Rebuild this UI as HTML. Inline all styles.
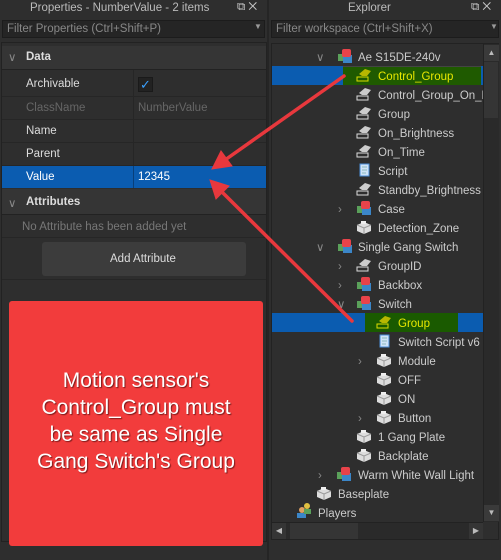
<!DOCTYPE html>
<html><head><style>
*{box-sizing:border-box;margin:0;padding:0}
body{width:501px;height:560px;background:#2e2e2e;font-family:"Liberation Sans",sans-serif;font-size:11.5px;color:#ccc;position:relative;overflow:hidden}
.a{position:absolute}
.t{white-space:nowrap}
</style></head><body>
<div class="a" style="left:0;top:0;width:267px;height:560px;background:#2e2e2e"></div>
<div class="a t" style="left:30px;top:2px;color:#bbb;font-size:11.5px">Properties - NumberValue - 2 items</div>
<div class="a t" style="left:237px;top:1px;color:#ccc">⧉ ✕</div>
<div class="a" style="left:2px;top:20px;width:263px;height:18px;background:#252525;border:1px solid #1c1c1c"></div>
<div class="a t" style="left:7px;top:23px;color:#888">Filter Properties (Ctrl+Shift+P)</div>
<div class="a t" style="left:254px;top:22px;color:#999;font-size:8px">▼</div>
<div class="a" style="left:1px;top:42px;width:266px;height:500px;border:1px solid #222;background:#2e2e2e"></div>
<div class="a" style="left:2px;top:46px;width:264px;height:24px;background:#353535;border-bottom:1px solid #222"></div>
<div class="a t" style="left:8px;top:50px;color:#888">∨</div>
<div class="a t" style="left:26px;top:51px;font-weight:bold;color:#ddd">Data</div>
<div class="a" style="left:2px;top:96px;width:264px;height:1px;background:#262626"></div>
<div class="a" style="left:2px;top:119px;width:264px;height:1px;background:#262626"></div>
<div class="a" style="left:2px;top:142px;width:264px;height:1px;background:#262626"></div>
<div class="a" style="left:2px;top:165px;width:264px;height:1px;background:#262626"></div>
<div class="a" style="left:133px;top:70px;width:1px;height:118px;background:#262626"></div>
<div class="a t" style="left:26px;top:78px;color:#ddd">Archivable</div>
<div class="a" style="left:138px;top:77px;width:15px;height:15px;background:#222;border:1px solid #1a1a1a;color:#3aa0ff;font-size:13px;line-height:13px;text-align:center">✓</div>
<div class="a t" style="left:26px;top:102px;color:#666">ClassName</div>
<div class="a t" style="left:138px;top:102px;color:#666">NumberValue</div>
<div class="a t" style="left:26px;top:125px;color:#ddd">Name</div>
<div class="a t" style="left:26px;top:148px;color:#ddd">Parent</div>
<div class="a" style="left:2px;top:166px;width:264px;height:22px;background:#0b5cb0"></div>
<div class="a" style="left:133px;top:166px;width:1px;height:22px;background:#083f7a"></div>
<div class="a t" style="left:26px;top:171px;color:#fff">Value</div>
<div class="a t" style="left:138px;top:171px;color:#fff">12345</div>
<div class="a" style="left:2px;top:189px;width:264px;height:26px;background:#353535;border-bottom:1px solid #222"></div>
<div class="a t" style="left:8px;top:196px;color:#888">∨</div>
<div class="a t" style="left:26px;top:196px;font-weight:bold;color:#ddd">Attributes</div>
<div class="a t" style="left:22px;top:221px;color:#777">No Attribute has been added yet</div>
<div class="a" style="left:2px;top:237px;width:264px;height:1px;background:#262626"></div>
<div class="a" style="left:42px;top:242px;width:204px;height:34px;background:#3c3c3c;border-radius:3px"></div>
<div class="a t" style="left:110px;top:253px;color:#ddd">Add Attribute</div>
<div class="a" style="left:2px;top:279px;width:264px;height:1px;background:#262626"></div>
<div class="a" style="left:9px;top:301px;width:254px;height:245px;background:#f23c3c;border-radius:3px;color:#fff;font-size:21px;line-height:27px;text-align:center;padding-top:66px;text-shadow:1px 1px 1px #7a1a1a">Motion sensor's<br>Control_Group must<br>be same as Single<br>Gang Switch's Group</div>

<div class="a" style="left:267px;top:0;width:2px;height:560px;background:#252525"></div>
<div class="a t" style="left:348px;top:2px;color:#bbb">Explorer</div>
<div class="a t" style="left:471px;top:1px;color:#ccc">⧉ ✕</div>
<div class="a" style="left:271px;top:20px;width:228px;height:18px;background:#252525;border:1px solid #1c1c1c"></div>
<div class="a t" style="left:276px;top:23px;color:#888">Filter workspace (Ctrl+Shift+X)</div>
<div class="a t" style="left:490px;top:22px;color:#999;font-size:8px">▼</div>
<div class="a" style="left:271px;top:43px;width:228px;height:497px;border:1px solid #222;background:#2e2e2e"></div>
<div class="a" style="left:483px;top:44px;width:16px;height:478px;background:#2a2a2a;border-left:1px solid #222"></div>
<div class="a" style="left:484px;top:45px;width:15px;height:16px;background:#3a3a3a;color:#bbb;font-size:8px;text-align:center;line-height:16px">▲</div>
<div class="a" style="left:484px;top:62px;width:14px;height:56px;background:#353535"></div>
<div class="a" style="left:484px;top:505px;width:15px;height:16px;background:#3a3a3a;color:#bbb;font-size:8px;text-align:center;line-height:16px">▼</div>
<div class="a" style="left:272px;top:522px;width:211px;height:17px;background:#2a2a2a;border-top:1px solid #222"></div>
<div class="a" style="left:272px;top:523px;width:14px;height:16px;background:#353535;color:#bbb;font-size:8px;text-align:center;line-height:16px">◀</div>
<div class="a" style="left:290px;top:523px;width:68px;height:16px;background:#353535"></div>
<div class="a" style="left:469px;top:523px;width:14px;height:16px;background:#353535;color:#bbb;font-size:8px;text-align:center;line-height:16px">▶</div>
<div class="a" style="left:272px;top:66px;width:211px;height:19px;background:#0b5cb0"></div>
<div class="a" style="left:343px;top:66px;width:138px;height:19px;background:#1f5a00;border-top:1px solid #444"></div>
<div class="a" style="left:272px;top:313px;width:211px;height:19px;background:#0b5cb0"></div>
<div class="a" style="left:365px;top:313px;width:93px;height:19px;background:#1a5a00"></div>

<svg class="a" style="left:0;top:0" width="501" height="560">
<defs>
<clipPath id="c"><rect x="272" y="44" width="211" height="478"/></clipPath>
<g id="m"><rect x="0" y="5" width="7" height="7" fill="#5aa05a"/><rect x="5" y="6" width="9" height="8" fill="#3b86c8"/><rect x="4" y="0" width="9" height="8" rx="2" fill="#e8434a"/></g>
<g id="v"><path d="M3 6 L9 1 L15 3 L11 8 L6 8 Z" fill="#ccc"/><rect x="1" y="9" width="11" height="4" fill="none" stroke="#ddd" stroke-width="1"/></g>
<g id="vy"><path d="M3 6 L9 1 L15 3 L11 8 L6 8 Z" fill="#b7b700"/><rect x="1" y="9" width="11" height="4" fill="none" stroke="#dddd00" stroke-width="1"/></g>
<g id="s"><path d="M3 1 H12 V13 H3 Z" fill="#cfe3f7" stroke="#4a8ed8"/><path d="M5 4H10M5 7H10M5 10H9" stroke="#7aa" stroke-width="0.8"/></g>
<g id="p"><path d="M1 5 L8 2 L15 5 L15 11 L8 14 L1 11 Z" fill="#ddd"/><path d="M1 5 L8 8 L15 5 M8 8 V14" stroke="#999" fill="none"/><rect x="5" y="1" width="5" height="3" fill="#eee"/></g>
</defs>
<g font-family="Liberation Sans" font-size="11.5" fill="#ccc" clip-path="url(#c)">
<text x="316" y="61" fill="#888">∨</text><use href="#m" x="338" y="49"/><text x="358" y="61">Ae S15DE-240v</text>
<use href="#vy" x="356" y="68"/><text x="378" y="80" fill="#e8e800">Control_Group</text>
<use href="#v" x="356" y="87"/><text x="378" y="99">Control_Group_On_Brightness</text>
<use href="#v" x="356" y="106"/><text x="378" y="118">Group</text>
<use href="#v" x="356" y="125"/><text x="378" y="137">On_Brightness</text>
<use href="#v" x="356" y="144"/><text x="378" y="156">On_Time</text>
<use href="#s" x="357" y="163"/><text x="378" y="175">Script</text>
<use href="#v" x="356" y="182"/><text x="378" y="194">Standby_Brightness</text>
<text x="338" y="213" fill="#888">›</text><use href="#m" x="357" y="201"/><text x="378" y="213">Case</text>
<use href="#p" x="356" y="220"/><text x="378" y="232">Detection_Zone</text>
<text x="316" y="251" fill="#888">∨</text><use href="#m" x="338" y="239"/><text x="358" y="251">Single Gang Switch</text>
<text x="338" y="270" fill="#888">›</text><use href="#v" x="356" y="258"/><text x="378" y="270">GroupID</text>
<text x="338" y="289" fill="#888">›</text><use href="#m" x="357" y="277"/><text x="378" y="289">Backbox</text>
<text x="337" y="308" fill="#888">∨</text><use href="#m" x="357" y="296"/><text x="378" y="308">Switch</text>
<use href="#vy" x="376" y="315"/><text x="398" y="327" fill="#e8e800">Group</text>
<use href="#s" x="377" y="334"/><text x="398" y="346">Switch Script v6 Copy</text>
<text x="358" y="365" fill="#888">›</text><use href="#p" x="376" y="353"/><text x="398" y="365">Module</text>
<use href="#p" x="376" y="372"/><text x="398" y="384">OFF</text>
<use href="#p" x="376" y="391"/><text x="398" y="403">ON</text>
<text x="358" y="422" fill="#888">›</text><use href="#p" x="376" y="410"/><text x="398" y="422">Button</text>
<use href="#p" x="356" y="429"/><text x="378" y="441">1 Gang Plate</text>
<use href="#p" x="356" y="448"/><text x="378" y="460">Backplate</text>
<text x="318" y="479" fill="#888">›</text><use href="#m" x="337" y="467"/><text x="358" y="479">Warm White Wall Light</text>
<use href="#p" x="316" y="486"/><text x="338" y="498">Baseplate</text>
<circle cx="302" cy="510" r="3" fill="#e0a060"/><rect x="297" y="513" width="9" height="5" fill="#3b86c8"/><circle cx="307" cy="506" r="3" fill="#e0c040"/><rect x="304" y="509" width="7" height="5" fill="#5aa05a"/><text x="318" y="517">Players</text>
</g>
<g stroke="#e8383d" stroke-width="3.5" fill="#e8383d" stroke-linecap="round">
<line x1="344" y1="76" x2="225" y2="160"/>
<polygon points="212,169 221,151 232,166" stroke-width="1"/>
<line x1="352" y1="321" x2="222" y2="192"/>
<polygon points="210,180 229,186 216,199" stroke-width="1"/>
</g>
</svg>
</body></html>
